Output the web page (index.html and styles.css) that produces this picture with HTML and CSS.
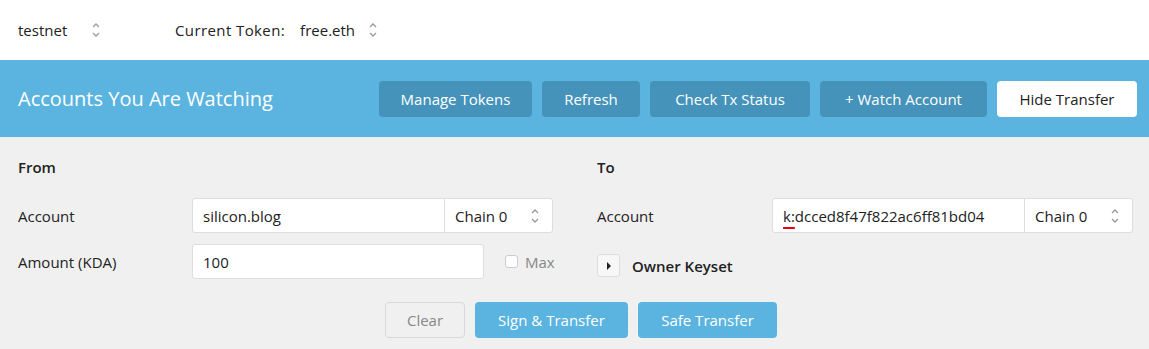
FILE: index.html
```html
<!DOCTYPE html>
<html lang="en">
<head>
    <meta charset="UTF-8">
    <title>Accounts You Are Watching</title>
    <link rel="stylesheet" href="styles.css">
</head>
<body>
    <!-- Network / token pickers -->
    <div class="topbar">
        <div class="picker network">
            <span>testnet</span>
            <svg class="updown" width="8" height="16" viewBox="0 0 8 16"><path d="M1 5l3-3 3 3M1 11l3 3 3-3"/></svg>
        </div>
        <div class="picker token">
            <span class="picker-label">Current Token:</span>
            <span>free.eth</span>
            <svg class="updown" width="8" height="16" viewBox="0 0 8 16"><path d="M1 5l3-3 3 3M1 11l3 3 3-3"/></svg>
        </div>
    </div>

    <!-- Header -->
    <div class="header">
        <h1>Accounts You Are Watching</h1>
        <div class="header-actions">
            <button class="btn dark">Manage Tokens</button>
            <button class="btn dark">Refresh</button>
            <button class="btn dark">Check Tx Status</button>
            <button class="btn dark">+ Watch Account</button>
            <button class="btn light">Hide Transfer</button>
        </div>
    </div>

    <!-- Transfer form -->
    <div class="transfer">
        <div class="columns">
            <div class="col">
                <h3>From</h3>
                <div class="row">
                    <label>Account</label>
                    <div class="field">
                        <span class="field-text">silicon.blog</span>
                        <span class="chain">Chain 0
                            <svg class="updown" width="8" height="16" viewBox="0 0 8 16"><path d="M1 5l3-3 3 3M1 11l3 3 3-3"/></svg>
                        </span>
                    </div>
                </div>
                <div class="row">
                    <label>Amount (KDA)</label>
                    <div class="field short">
                        <span class="field-text">100</span>
                    </div>
                    <span class="max"><span class="checkbox"></span>Max</span>
                </div>
            </div>
            <div class="col">
                <h3>To</h3>
                <div class="row">
                    <label>Account</label>
                    <div class="field">
                        <span class="field-text"><span class="spell">k:</span>dcced8f47f822ac6ff81bd04</span>
                        <span class="chain">Chain 0
                            <svg class="updown" width="8" height="16" viewBox="0 0 8 16"><path d="M1 5l3-3 3 3M1 11l3 3 3-3"/></svg>
                        </span>
                    </div>
                </div>
                <div class="keyset">
                    <span class="toggle"><svg width="6" height="10" viewBox="0 0 6 10"><path d="M1 1l4 4-4 4z"/></svg></span>
                    <span>Owner Keyset</span>
                </div>
            </div>
        </div>
        <div class="actions">
            <button class="btn ghost">Clear</button>
            <button class="btn blue">Sign &amp; Transfer</button>
            <button class="btn blue">Safe Transfer</button>
        </div>
    </div>
</body>
</html>
```

FILE: styles.css
```css
body {
    font-family: 'Open Sans', 'Liberation Sans', sans-serif;
    margin: 0;
    color: #222;
    font-size: 15px;
}
.updown {
    fill: none;
    stroke: #999;
    stroke-width: 1.3;
}
.topbar {
    height: 60px;
    display: flex;
    align-items: center;
    padding: 0 18px;
    background: #fff;
}
.picker {
    display: flex;
    align-items: center;
}
.picker.network {
    width: 157px;
}
.picker.network .updown {
    margin-left: 25px;
}
.picker-label {
    margin-right: 15px;
    letter-spacing: 0.4px;
}
.picker.token .updown {
    margin-left: 14px;
}
.header {
    background: #5ab4df;
    height: 77px;
    display: flex;
    align-items: center;
    justify-content: space-between;
    padding: 0 12px 0 18px;
}
.header h1 {
    margin: 0;
    font-size: 20px;
    font-weight: 400;
    color: #fff;
}
.header-actions {
    display: flex;
    gap: 10px;
}
.btn {
    font-family: inherit;
    font-size: 15px;
    height: 36px;
    border: none;
    border-radius: 4px;
    padding: 0 20px;
    cursor: pointer;
}
.btn.dark {
    background: #4593ba;
    color: #fff;
}
.btn.light {
    background: #fff;
    color: #222;
}
.header-actions .btn:nth-child(1) { width: 153px; }
.header-actions .btn:nth-child(2) { width: 98px; }
.header-actions .btn:nth-child(3) { width: 160px; }
.header-actions .btn:nth-child(4) { width: 167px; }
.header-actions .btn:nth-child(5) { width: 140px; }
.transfer {
    background: #f0f0f0;
    padding: 19px 16px 11px 18px;
}
.columns {
    display: grid;
    grid-template-columns: 535px 536px;
    gap: 44px;
}
.col h3 {
    margin: 0 0 20px;
    font-size: 15px;
    font-weight: 600;
    line-height: 22px;
}
.row {
    display: flex;
    align-items: center;
    margin-bottom: 11px;
}
.row label {
    width: 174px;
    flex-shrink: 0;
}
.col:nth-child(2) .row label {
    width: 175px;
}
.field {
    flex: 1;
    height: 35px;
    box-sizing: border-box;
    background: #fff;
    border: 1px solid #ddd;
    border-radius: 3px;
    display: flex;
    align-items: center;
}
.field.short {
    flex: none;
    width: 292px;
}
.field-text {
    flex: 1;
    padding-left: 10px;
}
.spell {
    text-decoration: underline solid #e00 2px;
    text-underline-offset: 5px;
}
.chain {
    width: 108px;
    height: 100%;
    box-sizing: border-box;
    border-left: 1px solid #ddd;
    display: flex;
    align-items: center;
    justify-content: space-between;
    padding: 0 13px 0 10px;
}
.max {
    display: flex;
    align-items: center;
    margin-left: 21px;
    color: #888;
}
.checkbox {
    width: 11px;
    height: 11px;
    border: 1px solid #ccc;
    border-radius: 3px;
    background: #fff;
    margin-right: 7px;
}
.keyset {
    display: flex;
    align-items: center;
    gap: 12px;
    margin-top: 21px;
    font-weight: 600;
}
.toggle {
    width: 23px;
    height: 23px;
    box-sizing: border-box;
    border: 1px solid #ddd;
    border-radius: 3px;
    background: #f7f7f7;
    display: flex;
    align-items: center;
    justify-content: center;
}
.toggle svg {
    fill: #222;
}
.actions {
    display: flex;
    justify-content: center;
    gap: 10px;
    margin-top: 12px;
    padding-left: 11px;
}
.btn.ghost {
    width: 80px;
    background: transparent;
    border: 1px solid #d8d8d8;
    color: #888;
}
.btn.blue {
    background: #5ab4df;
    color: #fff;
}
.actions .btn:nth-child(2) { width: 153px; }
.actions .btn:nth-child(3) { width: 139px; }
```
